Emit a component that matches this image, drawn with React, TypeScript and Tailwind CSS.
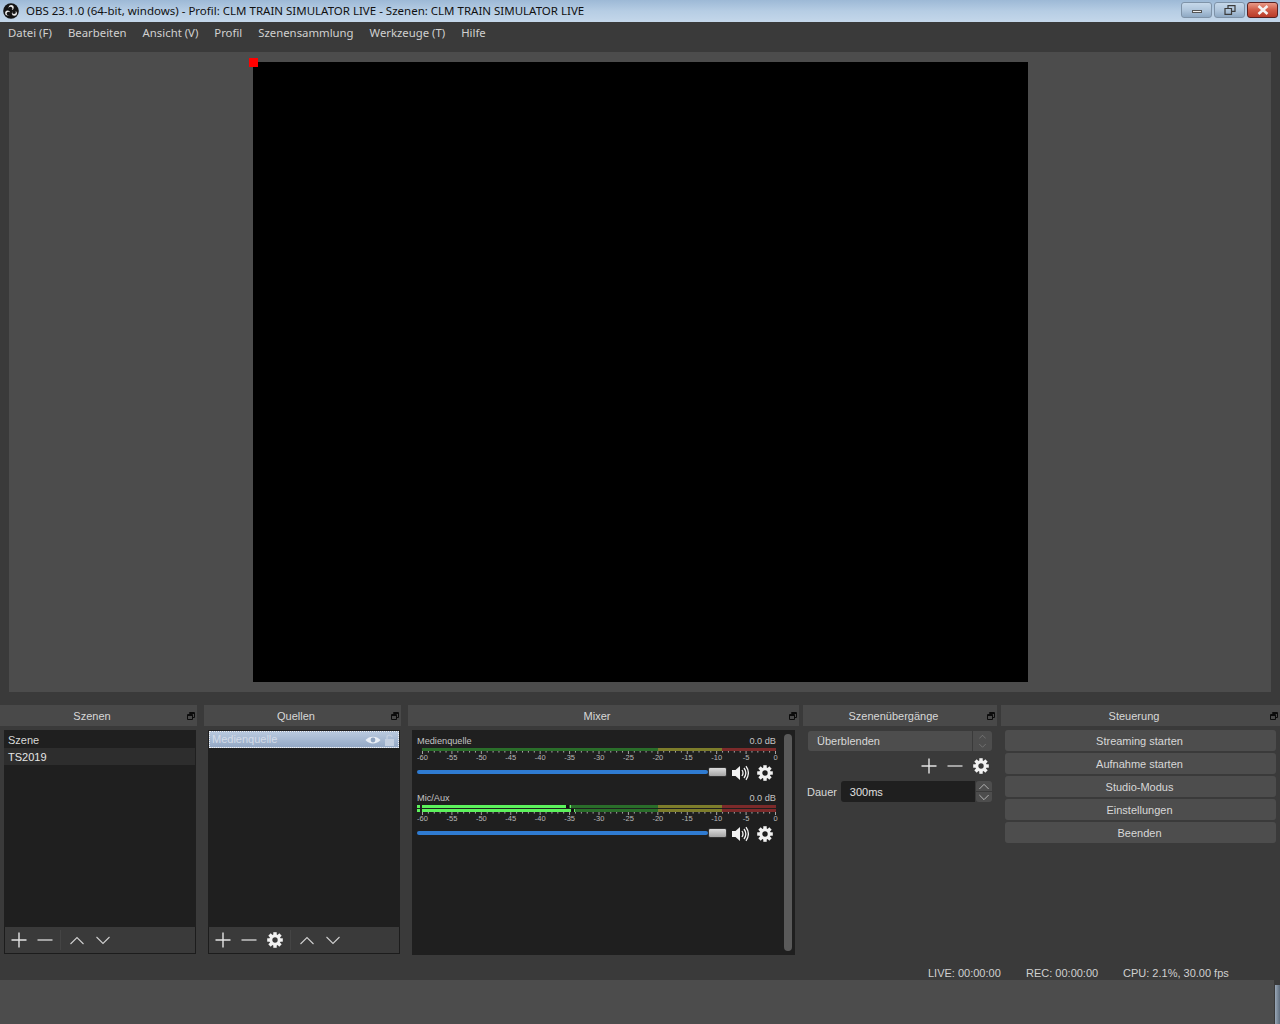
import React from "react";

function Plus() {
  return (
    <svg width="16" height="16" viewBox="0 0 16 16">
      <path d="M8 0.5V15.5M0.5 8H15.5" stroke="#e4e4e4" strokeWidth="1.4" fill="none" />
    </svg>
  );
}
function Minus() {
  return (
    <svg width="16" height="16" viewBox="0 0 16 16">
      <path d="M0.5 8H15.5" stroke="#d0d0d0" strokeWidth="1.4" fill="none" />
    </svg>
  );
}
function Gear({ size = 16 }: { size?: number }) {
  const teeth = [0, 45, 90, 135, 180, 225, 270, 315];
  return (
    <svg width={size} height={size} viewBox="0 0 16 16">
      {teeth.map((a) => (
        <rect key={a} x="6.3" y="0.2" width="3.4" height="4" fill="#f2f2f2" transform={`rotate(${a} 8 8)`} />
      ))}
      <circle cx="8" cy="8" r="4.2" fill="none" stroke="#f2f2f2" strokeWidth="3" />
    </svg>
  );
}
function Chevron({ up, w = 14, color = "#cfcfcf" }: { up: boolean; w?: number; color?: string }) {
  return (
    <svg width={w} height={w / 2 + 2} viewBox="0 0 14 9">
      <path d={up ? "M0.5 8L7 1.5L13.5 8" : "M0.5 1L7 7.5L13.5 1"} stroke={color} strokeWidth="1.1" fill="none" />
    </svg>
  );
}
function Float() {
  return (
    <svg width="8" height="8" viewBox="0 0 8 8" className="shrink-0">
      <path d="M2.5 1.5V.5H7.5V5.5H5.5" stroke="#0c0c0c" strokeWidth="1" fill="none" />
      <path d="M.5 2.5H5.5V7.5H.5Z" stroke="#0c0c0c" strokeWidth="1" fill="none" />
      <path d="M.5 3.5H5.5M2.5 1.5H7.5" stroke="#0c0c0c" strokeWidth="1" />
    </svg>
  );
}
function Speaker() {
  return (
    <svg width="17" height="16" viewBox="0 0 17 16">
      <path d="M0 5H3.5L8 1V15L3.5 11H0Z" fill="#f2f2f2" />
      <path d="M10 5C11.2 6.8 11.2 9.2 10 11M12 3C14.2 6 14.2 10 12 13M14 1.2C17 5.5 17 10.5 14 14.8" stroke="#f2f2f2" strokeWidth="1.3" fill="none" />
    </svg>
  );
}
function ObsLogo() {
  return (
    <svg width="16" height="16" viewBox="0 0 16 16">
      <circle cx="8" cy="8" r="7.8" fill="#141414" />
      <circle cx="8.2" cy="4.6" r="2.5" fill="#e9e9e9" />
      <circle cx="4.6" cy="10" r="2.5" fill="#e9e9e9" />
      <circle cx="11.4" cy="10.2" r="2.5" fill="#e9e9e9" />
      <circle cx="7.4" cy="5.6" r="1.9" fill="#141414" />
      <circle cx="5.6" cy="10.6" r="1.9" fill="#141414" />
      <circle cx="11" cy="9" r="1.9" fill="#141414" />
    </svg>
  );
}

function Dock({ title, width, ml, children }: { title: string; width: string; ml: string; children: React.ReactNode }) {
  return (
    <section className={`${width} ${ml} flex flex-col shrink-0`}>
      <header className="h-[21px] bg-[#494949] flex items-center pr-[2px] text-[11px] leading-none text-[#d8d8d8]">
        <span className="flex-1 text-center pr-[3px] pt-px">{title}</span>
        <Float />
      </header>
      {children}
    </section>
  );
}

function ToolBar({ gear }: { gear?: boolean }) {
  return (
    <div className="h-[27px] bg-[#3a3a3a] border border-t-0 border-[#1c1c1c] flex items-center pl-[6px]">
      <Plus />
      <span className="ml-[10px]"><Minus /></span>
      {gear && <span className="ml-[10px]"><Gear /></span>}
      <span className="w-px h-[20px] bg-[#444444] ml-[7px] mr-[9px]" />
      <Chevron up />
      <span className="ml-[12px]"><Chevron up={false} /></span>
    </div>
  );
}

const ticksMajor = [-60, -55, -50, -45, -40, -35, -30, -25, -20, -15, -10, -5, 0];

function Scale() {
  const x0 = 5.5;
  const span = 353;
  const minor = Array.from({ length: 61 }, (_, i) => i);
  return (
    <svg width="364" height="14" viewBox="0 0 364 14" className="block">
      {minor.map((i) => {
        const x = x0 + (i * span) / 60;
        const major = i % 5 === 0;
        return <line key={i} x1={x} x2={x} y1="0" y2={major ? 3 : 1.6} stroke="#c8c8c8" strokeWidth="0.8" />;
      })}
      {ticksMajor.map((v, i) => (
        <text
          key={v}
          x={x0 + (i * span) / 12}
          y="9"
          textAnchor="middle"
          fontSize="7.5"
          fill="#b8b8b8"
          fontFamily='"Liberation Sans", sans-serif'
        >
          {v}
        </text>
      ))}
    </svg>
  );
}

function MeterBar({ level, peak }: { level: number; peak?: number }) {
  return (
    <div className="relative h-[3px] w-[354px] flex">
      <div className="w-[236px] bg-[#2a6e2a]" />
      <div className="w-[64px] bg-[#7d7d2b]" />
      <div className="flex-1 bg-[#7c2a2a]" />
      {level > 0 && (
        <>
          <div className="absolute left-0 top-0 bottom-0 bg-[#5cf25c]" style={{ width: level }} />
          <div className="absolute top-0 bottom-0 bg-[#111111]" style={{ left: level, width: 3 }} />
        </>
      )}
      {peak ? <div className="absolute top-0 bottom-0 w-[1px] bg-[#66ee66]" style={{ left: peak }} /> : null}
    </div>
  );
}

function Channel({ name, active, gap }: { name: string; active?: boolean; gap: string }) {
  return (
    <div className={gap}>
      <div className="flex justify-between items-center h-[12px] pt-px text-[9.2px] leading-none text-[#c4c4c4] pr-[19px]">
        <span>{name}</span>
        <span>0.0 dB</span>
      </div>
      {active ? (
        <div className="flex mt-[1px]">
          <div className="w-[3px] mr-[2px] flex flex-col gap-[1px]">
            <div className="h-[3px] bg-[#5cf25c]" />
            <div className="h-[3px] bg-[#5cf25c]" />
          </div>
          <div className="flex flex-col gap-[1px]">
            <MeterBar level={144} peak={148} />
            <MeterBar level={149} peak={152} />
          </div>
        </div>
      ) : (
        <div className="ml-[5px] mt-[1px]">
          <MeterBar level={0} />
        </div>
      )}
      <Scale />
      <div className="flex items-center h-[16px]">
        <div className="w-[291px] h-[4px] mb-[2px] bg-[#2f7bd1] rounded-full" />
        <div className="w-[19px] h-[10px] mb-[2px] rounded-[2px] bg-gradient-to-b from-[#dcdcdc] to-[#a4a4a4] border border-[#333333]" />
        <span className="ml-[5px]"><Speaker /></span>
        <span className="ml-[8px]"><Gear /></span>
      </div>
    </div>
  );
}

function WinBtn({ children, className }: { children: React.ReactNode; className: string }) {
  return (
    <div className={`w-[31px] h-[16px] rounded-[3px] border flex items-center justify-center ${className}`}>
      {children}
    </div>
  );
}

function SideBtn({ label }: { label: string }) {
  return (
    <button className="h-[21px] w-[271px] rounded-[3px] bg-[#4d4d4d] pt-px pr-[2px] text-[11px] leading-none text-[#d8d8d8] text-center">
      {label}
    </button>
  );
}

export default function App() {
  return (
    <div className="w-[1280px] h-[1024px] bg-[#3a3a3a] flex flex-col overflow-hidden font-['Liberation_Sans',sans-serif]">
      {/* title bar */}
      <div className="h-[22px] bg-gradient-to-b from-[#9db9d6] via-[#b6cde4] to-[#c4d7ea] flex items-center pl-[3px] pr-[2px] font-['Noto_Sans',sans-serif]">
        <ObsLogo />
        <span className="ml-[7px] flex-1 text-[11.5px] leading-none text-[#111111] whitespace-nowrap">
          OBS 23.1.0 (64-bit, windows) - Profil: CLM TRAIN SIMULATOR LIVE - Szenen: CLM TRAIN SIMULATOR LIVE
        </span>
        <div className="flex gap-[2px] mb-[2px]">
          <WinBtn className="border-[#7f93a8] bg-gradient-to-b from-[#c6d8ea] via-[#b0c6dc] to-[#8fa9c4]">
            <div className="w-[10px] h-[3px] mt-[3px] bg-[#f0f0f0] border border-[#555555]" />
          </WinBtn>
          <WinBtn className="border-[#7f93a8] bg-gradient-to-b from-[#c6d8ea] via-[#b0c6dc] to-[#8fa9c4]">
            <svg width="12" height="10" viewBox="0 0 12 10">
              <path d="M4 3V.7H11V6.3H8M1 3.5H7.5V9.3H1Z" stroke="#3c3c3c" strokeWidth="1.2" fill="none" />
            </svg>
          </WinBtn>
          <WinBtn className="border-[#5a2020] bg-gradient-to-b from-[#e89a88] via-[#cf5a45] to-[#b83a28]">
            <svg width="12" height="10" viewBox="0 0 12 10">
              <path d="M1.5 1L10.5 9M10.5 1L1.5 9" stroke="#f4f4f4" strokeWidth="2.6" fill="none" />
            </svg>
          </WinBtn>
        </div>
      </div>

      {/* menu */}
      <nav className="h-[22px] flex items-center pl-[8px] gap-[16px] text-[11.35px] leading-none text-[#d0d0d0] font-['Noto_Sans',sans-serif]">
        {["Datei (F)", "Bearbeiten", "Ansicht (V)", "Profil", "Szenensammlung", "Werkzeuge (T)", "Hilfe"].map((m) => (
          <span key={m}>{m}</span>
        ))}
      </nav>

      {/* preview */}
      <main className="mt-[8px] mx-[9px] h-[640px] bg-[#4c4c4c] flex justify-center pt-[10px]">
        <div className="relative w-[775px] h-[620px] bg-black">
          <div className="absolute -left-[4px] -top-[4px] w-[9px] h-[9px] bg-[#ff0000]" />
        </div>
      </main>

      {/* docks */}
      <div className="mt-[13px] h-[250px] flex">
        <Dock title="Szenen" width="w-[197px]" ml="ml-0">
          <div className="ml-[4px] mr-px mt-[4px] flex flex-col">
            <div className="h-[197px] pt-px bg-[#1f1f1f] text-[11px] leading-none text-[#d8d8d8]">
              <div className="h-[17px] flex items-center pl-[4px] pt-px">Szene</div>
              <div className="h-[17px] flex items-center pl-[4px] pt-px mr-px bg-[#2d2d2d] text-[#e6e6e6]">TS2019</div>
            </div>
            <ToolBar />
          </div>
        </Dock>
        <Dock title="Quellen" width="w-[197px]" ml="ml-[7px]">
          <div className="ml-[4px] mr-px mt-[4px] flex flex-col">
            <div className="h-[197px] bg-[#1f1f1f] pt-px px-px">
              <div className="h-[17px] bg-gradient-to-b from-[#b9c9de] to-[#94a9c6] border border-dotted border-[#f0f0f0] flex items-center pl-[2px] pr-[3px] text-[11px] leading-none text-[#d4dce8]">
                <span className="flex-1">Medienquelle</span>
                <svg width="16" height="10" viewBox="0 0 16 10">
                  <path d="M0.5 5C4 0.5 12 0.5 15.5 5C12 9.5 4 9.5 0.5 5Z" fill="#e8edf4" />
                  <circle cx="8" cy="5" r="2.4" fill="#8ea3bf" />
                </svg>
                <svg width="11" height="12" viewBox="0 0 11 12" className="ml-[3px]">
                  <rect x="1" y="5" width="9" height="7" fill="#c3cfe0" />
                  <path d="M3 5V3C3 .5 8 .5 8 3" stroke="#c3cfe0" strokeWidth="1.3" fill="none" />
                </svg>
              </div>
            </div>
            <ToolBar gear />
          </div>
        </Dock>
        <Dock title="Mixer" width="w-[391px]" ml="ml-[7px]">
          <div className="ml-[4px] -mr-[-4px] mt-[4px] h-[225px] bg-[#1f1f1f] flex pl-[5px] pt-[5px] relative">
            <div className="flex-1">
              <Channel name="Medienquelle" gap="" />
              <Channel name="Mic/Aux" active gap="mt-[11px]" />
            </div>
            <div className="absolute right-[3px] top-[4px] w-[8px] h-[217px] rounded-full bg-[#5a5a5a]" />
          </div>
        </Dock>
        <Dock title="Szenenübergänge" width="w-[194px]" ml="ml-[4px]">
          <div className="mt-[5px] pl-[4px] pr-[5px] flex flex-col text-[11px] leading-none text-[#d8d8d8]">
            <div className="ml-px h-[20px] rounded-[3px] bg-[#4d4d4d] flex items-center">
              <span className="flex-1 pl-[9px]">Überblenden</span>
              <span className="w-[20px] h-full border-l border-[#3a3a3a] flex flex-col items-center justify-center gap-[3px]">
                <Chevron up w={7} color="#8f8f8f" />
                <Chevron up={false} w={7} color="#8f8f8f" />
              </span>
            </div>
            <div className="h-[26px] mt-[2px] flex items-center justify-end pr-[3px] gap-[10px]">
              <Plus />
              <Minus />
              <Gear />
            </div>
            <div className="flex items-center mt-[2px]">
              <span className="w-[34px] pt-px">Dauer</span>
              <div className="h-[21px] w-[135px] rounded-l-[3px] bg-[#1f1f1f] flex items-center pl-[9px] pt-px text-[#e0e0e0]">300ms</div>
              <div className="w-[16px] h-[21px] ml-[1px] flex flex-col gap-px">
                <span className="flex-1 rounded-t-[3px] bg-[#4d4d4d] flex items-center justify-center"><Chevron up w={10} /></span>
                <span className="flex-1 rounded-b-[3px] bg-[#4d4d4d] flex items-center justify-center"><Chevron up={false} w={10} /></span>
              </div>
            </div>
          </div>
        </Dock>
        <Dock title="Steuerung" width="w-[279px]" ml="ml-[4px]">
          <div className="mt-[4px] pl-[4px] flex flex-col gap-[2px]">
            {["Streaming starten", "Aufnahme starten", "Studio-Modus", "Einstellungen", "Beenden"].map((b) => (
              <SideBtn key={b} label={b} />
            ))}
          </div>
        </Dock>
      </div>

      {/* status */}
      <div className="h-[25px] flex items-center pl-[928px] pt-[11px] text-[11px] leading-none text-[#d0d0d0] whitespace-nowrap">
        <span className="w-[98px]">LIVE: 00:00:00</span>
        <span className="w-[97px]">REC: 00:00:00</span>
        <span>CPU: 2.1%, 30.00 fps</span>
      </div>

      {/* bottom */}
      <div className="flex-1 flex">
        <div className="w-[1274px] bg-[#4c4c4c]" />
        <div className="flex-1 pt-[5px]">
          <div className="h-full ml-px bg-gradient-to-r from-[#9aa8b8] to-[#5e6c7c]" />
        </div>
      </div>
    </div>
  );
}
